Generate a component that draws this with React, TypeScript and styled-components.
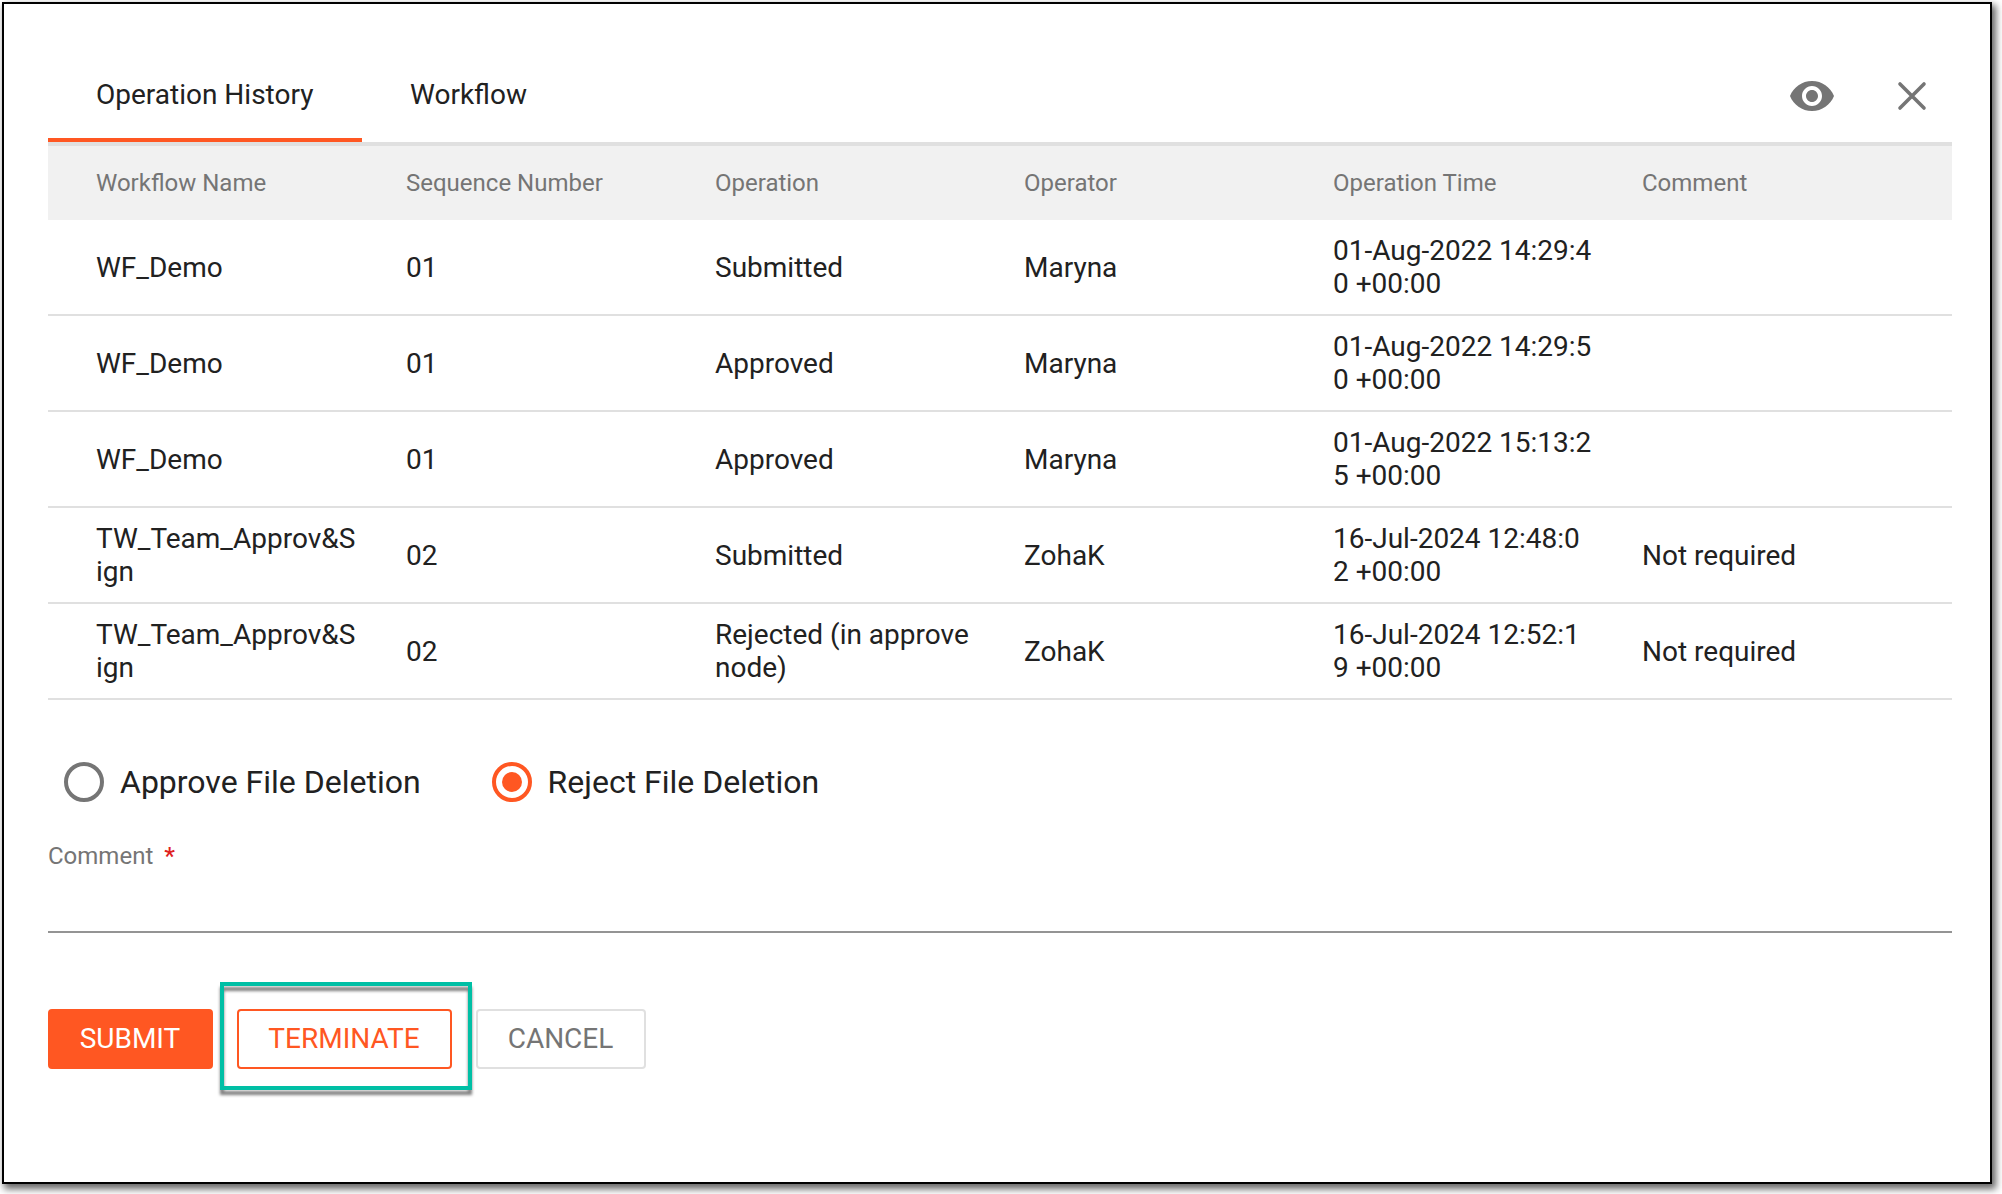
import React, { useState } from "react";
import styled, { createGlobalStyle } from "styled-components";

const GlobalStyle = createGlobalStyle`
  * {
    box-sizing: border-box;
  }

  body {
    margin: 0;
    background: #fff;
    font-family: Roboto, "Liberation Sans", sans-serif;
    color: #212121;
  }
`;

const Wrap = styled.div`
  width: 2002px;
  height: 1194px;
  padding: 2px 10px 10px 2px;
  overflow: hidden;
`;

const Dialog = styled.div`
  width: 100%;
  height: 100%;
  border: 2px solid #000;
  padding: 44px 38px 0 44px;
  background: #fff;
  box-shadow: 3px 4px 7px 1px rgba(0, 0, 0, 0.6);
`;

const TabBar = styled.div`
  display: flex;
  height: 98px;
  border-bottom: 4px solid #e0e0e0;
`;

const Tab = styled.button<{ $active?: boolean }>`
  height: 94px;
  padding: 2px 48px 0;
  border: 0;
  border-bottom: 4px solid ${(props) => (props.$active ? "#ff5722" : "transparent")};
  background: none;
  font-family: inherit;
  font-size: 28px;
  line-height: 33px;
  color: #212121;

  &:first-child {
    width: 314px;
    padding-right: 0;
    text-align: left;
  }
`;

const Tools = styled.div`
  display: flex;
  align-items: center;
  gap: 52px;
  height: 96px;
  margin-left: auto;
  padding-right: 16px;
`;

const IconButton = styled.button`
  display: flex;
  padding: 0;
  border: 0;
  background: none;
  color: #757575;
`;

const Row = styled.div`
  display: grid;
  grid-template-columns: 310px repeat(5, 309px);
  align-items: center;
  height: 96px;
  padding-left: 48px;
  border-bottom: 2px solid #e0e0e0;
`;

const HeadRow = styled(Row)`
  height: 74px;
  border-bottom: 0;
  background: #f1f1f1;
  font-size: 24px;
  color: #757575;
`;

const Cell = styled.div`
  padding-right: 48px;
  font-size: 28px;
  line-height: 33px;
  word-break: break-all;
`;

const WordCell = styled(Cell)`
  word-break: normal;
`;

const Options = styled.div`
  display: flex;
  gap: 71px;
  padding: 62px 0 0 16px;
`;

const Option = styled.label`
  display: flex;
  align-items: center;
  gap: 16px;
  height: 40px;
  font-size: 32px;
  line-height: 40px;
`;

const Radio = styled.span<{ $checked: boolean }>`
  display: flex;
  align-items: center;
  justify-content: center;
  width: 40px;
  height: 40px;
  border: 4px solid ${(props) => (props.$checked ? "#ff5722" : "#757575")};
  border-radius: 50%;

  &::after {
    content: "";
    width: 20px;
    height: 20px;
    border-radius: 50%;
    background: ${(props) => (props.$checked ? "#ff5722" : "transparent")};
  }
`;

const Field = styled.div`
  height: 131px;
  padding-top: 40px;
  border-bottom: 2px solid #949494;
  font-size: 24px;
  line-height: 28px;
  color: #757575;
`;

const Required = styled.span`
  margin-left: 11px;
  font-weight: 500;
  color: #e02020;
`;

const Actions = styled.div`
  display: flex;
  gap: 24px;
  margin-top: 76px;
`;

const Button = styled.button<{ $width: number }>`
  width: ${(props) => props.$width}px;
  height: 60px;
  padding: 0 1px 2px 0;
  border: 2px solid #e0e0e0;
  border-radius: 4px;
  background: #fff;
  font-family: inherit;
  font-size: 28px;
  line-height: 33px;
  color: #757575;
`;

const SubmitButton = styled(Button)`
  border-color: #ff5722;
  background: #ff5722;
  color: #fff;
`;

const TerminateButton = styled(Button)`
  border-color: #ff5722;
  color: #ff5722;
`;

const Marked = styled.div`
  position: relative;
`;

const Marker = styled.div`
  position: absolute;
  top: -27px;
  left: -17px;
  width: 252px;
  height: 108px;
  border: 4px solid #00bfa5;
  filter: drop-shadow(0 5px 1.5px rgba(0, 0, 0, 0.5));
  pointer-events: none;
`;

const headers = [
  "Workflow Name",
  "Sequence Number",
  "Operation",
  "Operator",
  "Operation Time",
  "Comment",
];

const history = [
  ["WF_Demo", "01", "Submitted", "Maryna", "01-Aug-2022 14:29:40 +00:00", ""],
  ["WF_Demo", "01", "Approved", "Maryna", "01-Aug-2022 14:29:50 +00:00", ""],
  ["WF_Demo", "01", "Approved", "Maryna", "01-Aug-2022 15:13:25 +00:00", ""],
  ["TW_Team_Approv&Sign", "02", "Submitted", "ZohaK", "16-Jul-2024 12:48:02 +00:00", "Not required"],
  ["TW_Team_Approv&Sign", "02", "Rejected (in approve node)", "ZohaK", "16-Jul-2024 12:52:19 +00:00", "Not required"],
];

function App() {
  const [choice, setChoice] = useState("reject");

  return (
    <Wrap>
      <GlobalStyle />
      <Dialog>
        <TabBar>
          <Tab $active>Operation History</Tab>
          <Tab>Workflow</Tab>
          <Tools>
            <IconButton>
              <svg width="48" height="48" viewBox="0 0 24 24" fill="currentColor">
                <path d="M12 4.5C7 4.5 2.73 7.61 1 12c1.73 4.39 6 7.5 11 7.5s9.27-3.11 11-7.5c-1.73-4.39-6-7.5-11-7.5zM12 17c-2.76 0-5-2.24-5-5s2.24-5 5-5 5 2.24 5 5-2.24 5-5 5zm0-8c-1.66 0-3 1.34-3 3s1.34 3 3 3 3-1.34 3-3-1.34-3-3-3z" />
              </svg>
            </IconButton>
            <IconButton>
              <svg
                width="48"
                height="48"
                viewBox="0 0 48 48"
                fill="none"
                stroke="currentColor"
                strokeWidth="3.6"
                strokeLinecap="round"
              >
                <path d="M12 12 36 36M36 12 12 36" />
              </svg>
            </IconButton>
          </Tools>
        </TabBar>
        <HeadRow>
          {headers.map((header) => (
            <div key={header}>{header}</div>
          ))}
        </HeadRow>
        {history.map((row) => (
          <Row key={row[4]}>
            <Cell>{row[0]}</Cell>
            <Cell>{row[1]}</Cell>
            <WordCell>{row[2]}</WordCell>
            <Cell>{row[3]}</Cell>
            <Cell>{row[4]}</Cell>
            <WordCell>{row[5]}</WordCell>
          </Row>
        ))}
        <Options>
          <Option onClick={() => setChoice("approve")}>
            <Radio $checked={choice === "approve"} />
            Approve File Deletion
          </Option>
          <Option onClick={() => setChoice("reject")}>
            <Radio $checked={choice === "reject"} />
            Reject File Deletion
          </Option>
        </Options>
        <Field>
          Comment
          <Required>*</Required>
        </Field>
        <Actions>
          <SubmitButton $width={165}>SUBMIT</SubmitButton>
          <Marked>
            <TerminateButton $width={215}>TERMINATE</TerminateButton>
            <Marker />
          </Marked>
          <Button $width={170}>CANCEL</Button>
        </Actions>
      </Dialog>
    </Wrap>
  );
}

export default App;
